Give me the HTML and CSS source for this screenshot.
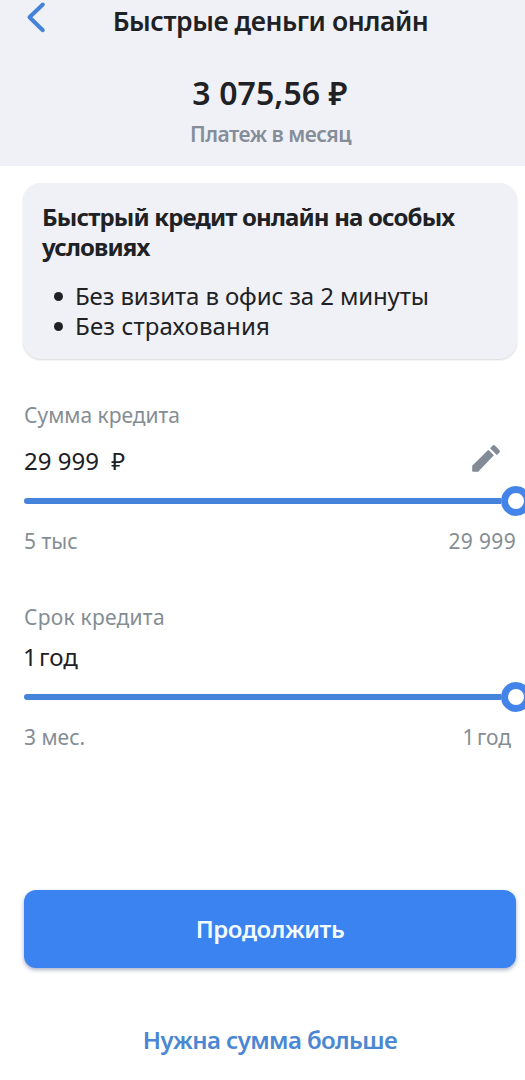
FILE: index.html
```html
<!DOCTYPE html>
<html lang="ru">
<head>
<meta charset="utf-8">
<meta name="viewport" content="width=device-width">
<title>Быстрые деньги онлайн</title>
<link rel="stylesheet" href="styles.css">
</head>
<body>
<header class="header">
  <div class="topbar">
    <button class="back" aria-label="Назад">
      <svg width="24" height="34" viewBox="0 0 24 34" fill="none"><path d="M18.800 4.500L5.500 17.200l13.300 13" stroke="#4583d8" stroke-width="4" stroke-linecap="round" stroke-linejoin="round"/></svg>
    </button>
    <h1 class="title">Быстрые деньги онлайн</h1>
  </div>
  <div class="amount">3 075,56 ₽</div>
  <div class="caption">Платеж в месяц</div>
</header>
<main class="content">
  <section class="card">
    <h2 class="card-title">Быстрый кредит онлайн на особых условиях</h2>
    <ul class="benefits">
      <li class="visit">Без визита в офис за 2 минуты</li>
      <li class="insurance">Без страхования</li>
    </ul>
  </section>
  <section class="field field-sum">
    <div class="label">Сумма кредита</div>
    <div class="value-row">
      <span class="value">29 999&nbsp; ₽</span>
      <svg class="edit" width="30" height="30" viewBox="0 0 30 30" fill="#838b97"><path d="M1.200 22.700L17.400 6.800l5.500 5.500L7.200 28.700H2q-.8 0-.8-.8zM19 5.200l2.700-2.600q1.100-1 2.200 0l4.600 4.600q1 1.100 0 2.200l-2.700 2.600z"/></svg>
    </div>
    <div class="slider"><div class="track"></div><div class="thumb"></div></div>
    <div class="range"><span>5 тыс</span><span class="max-sum">29 999</span></div>
  </section>
  <section class="field field-term">
    <div class="label">Срок кредита</div>
    <div class="value-row"><span class="value">1 год</span></div>
    <div class="slider"><div class="track"></div><div class="thumb"></div></div>
    <div class="range range-term"><span>3 мес.</span><span class="max-term">1 год</span></div>
  </section>
  <button class="submit">Продолжить</button>
  <a class="more">Нужна сумма больше</a>
</main>
</body>
</html>
```
FILE: styles.css
```css
* { box-sizing: border-box; }
body {
  margin: 0;
  height: 1080px;
  overflow: hidden;
  background: #fff;
  color: #202124;
  font: 24px/30px "Noto Sans", sans-serif;
}
h1, h2, ul { margin: 0; padding: 0; }
button { border: 0; padding: 0; background: none; font: inherit; }
.header { height: 166px; background: #f0f1f6; text-align: center; }
.topbar { display: grid; grid-template-columns: 56px 1fr 40px; height: 40px; }
.back { height: 34px; padding-left: 24px; text-align: left; line-height: 0; }
.title { font-size: 26.5px; font-weight: 600; line-height: 42px; letter-spacing: -.43px; white-space: nowrap; }
.amount { margin-top: 30px; padding-left: 15px; font-size: 32px; font-weight: 600; line-height: 45px; letter-spacing: .1px; }
.caption { margin-top: 5px; padding-left: 16px; font-size: 21px; font-weight: 600; line-height: 28px; letter-spacing: -.5px; color: #858d99; }
.content { display: flex; flex-direction: column; padding: 17px 9px 0 24px; }
.card {
  height: 176px;
  margin: 0 -1px;
  padding: 19px;
  border-radius: 18px;
  background: #f0f1f6;
  box-shadow: 0 1px 2px rgba(0, 0, 0, .16);
}
.card-title { font-size: 24px; font-weight: 700; line-height: 30px; letter-spacing: -.84px; }
.benefits { margin-top: 19px; list-style: none; }
.benefits li { display: flex; align-items: center; }
.benefits li::before { content: ""; width: 9px; height: 9px; margin: 0 12px 0 12px; border-radius: 50%; background: #202124; }
.visit { letter-spacing: -.12px; }
.insurance { letter-spacing: .15px; }
.field { display: flex; flex-direction: column; }
.field-sum { margin-top: 41px; }
.field-term { margin-top: 46px; }
.label, .range { font-size: 21px; color: #858d94; }
.value-row { display: flex; justify-content: space-between; height: 40px; margin-top: 11px; padding-right: 15px; line-height: 40px; }
.edit { margin-top: 2px; }
.field-term .label { letter-spacing: .25px; }
.field-term .value-row { margin-top: 5px; }
.field-term .value { margin-left: -1px; word-spacing: -4px; }
.slider { display: flex; align-items: center; height: 30px; margin: 5px -15px 0 0; }
.track { flex: 1; height: 6px; border-radius: 3px 0 0 3px; background: #4583dc; }
.thumb { flex: none; width: 30px; height: 30px; border: 7px solid #4484e8; border-radius: 50%; background: #fff; }
.range { display: flex; justify-content: space-between; margin-top: 10px; }
.range-term { padding-right: 5px; }
.max-sum { letter-spacing: .35px; }
.max-term { word-spacing: -3px; }
.submit {
  height: 78px;
  margin-top: 138px;
  border-radius: 12px;
  background: #3b83f1;
  box-shadow: 0 2px 4px rgba(40, 60, 110, .4);
  color: #f2fcff;
  font-weight: 600;
  letter-spacing: -.42px;
}
.more { margin-top: 52px; line-height: 40px; text-align: center; font-weight: 600; letter-spacing: -.6px; color: #4b87d2; }
```
